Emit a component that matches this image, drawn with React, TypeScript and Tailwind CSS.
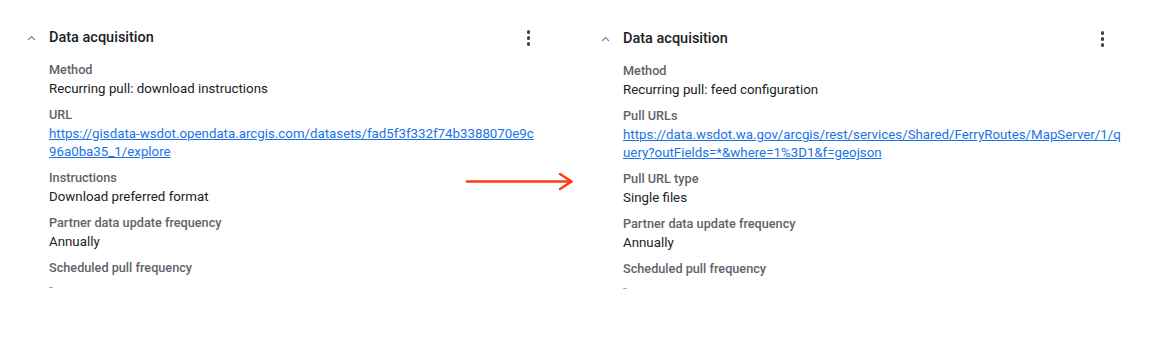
import React from "react";

type Field = { label: string; value: string; link?: boolean };

const leftFields: Field[] = [
  { label: "Method", value: "Recurring pull: download instructions" },
  {
    label: "URL",
    value:
      "https://gisdata-wsdot.opendata.arcgis.com/datasets/fad5f3f332f74b3388070e9c96a0ba35_1/explore",
    link: true,
  },
  { label: "Instructions", value: "Download preferred format" },
  { label: "Partner data update frequency", value: "Annually" },
  { label: "Scheduled pull frequency", value: "-" },
];

const rightFields: Field[] = [
  { label: "Method", value: "Recurring pull: feed configuration" },
  {
    label: "Pull URLs",
    value:
      "https://data.wsdot.wa.gov/arcgis/rest/services/Shared/FerryRoutes/MapServer/1/query?outFields=*&where=1%3D1&f=geojson",
    link: true,
  },
  { label: "Pull URL type", value: "Single files" },
  { label: "Partner data update frequency", value: "Annually" },
  { label: "Scheduled pull frequency", value: "-" },
];

function Panel({
  fields,
  offset,
  linkWidth,
}: {
  fields: Field[];
  offset: string;
  linkWidth: string;
}) {
  return (
    <div className={`w-[574px] shrink-0 ${offset}`}>
      <div className="flex items-center h-[24px] pl-[27px] pr-[44px]">
        <svg width="9" height="6" viewBox="0 0 9 6" className="shrink-0">
          <path d="M1 5 L4.5 1.5 L8 5" fill="none" stroke="#80868b" strokeWidth="1.2" />
        </svg>
        <div className="ml-[13px] text-[14.5px] font-medium text-[#202124] leading-[24px]">
          Data acquisition
        </div>
        <div className="ml-auto flex flex-col items-center gap-[2.5px]">
          <span className="block w-[3.5px] h-[3.5px] rounded-full bg-[#3c4043]" />
          <span className="block w-[3.5px] h-[3.5px] rounded-full bg-[#3c4043]" />
          <span className="block w-[3.5px] h-[3.5px] rounded-full bg-[#3c4043]" />
        </div>
      </div>
      <div className="pl-[49px] mt-[10px] flex flex-col gap-[7px]">
        {fields.map((f) => (
          <div key={f.label} className="flex flex-col">
            <div className="text-[12.7px] font-medium text-[#5f6368] leading-[20px]">{f.label}</div>
            {f.link ? (
              <a
                href="#"
                className={`${linkWidth} text-[13.3px] leading-[18px] text-[#1a73e8] underline break-all`}
              >
                {f.value}
              </a>
            ) : (
              <div
                className={`text-[13.3px] leading-[18px] ${
                  f.value === "-" ? "text-[#9aa0a6]" : "text-[#202124]"
                }`}
              >
                {f.value}
              </div>
            )}
          </div>
        ))}
      </div>
    </div>
  );
}

export default function App() {
  return (
    <div
      className="relative w-[1152px] h-[347px] bg-white overflow-hidden"
      style={{ fontFamily: "Roboto, 'Noto Sans', Arial, sans-serif" }}
    >
      <div className="flex pt-[26px]">
        <Panel fields={leftFields} offset="" linkWidth="w-[488px]" />
        <Panel fields={rightFields} offset="mt-[1px]" linkWidth="w-[498px]" />
      </div>
      <svg
        className="absolute left-[465px] top-[172px]"
        width="112"
        height="20"
        viewBox="0 0 112 20"
      >
        <path d="M2 9.5 L106 9.5" stroke="#ff3a12" strokeWidth="2.5" strokeLinecap="round" />
        <path
          d="M95 2 L106.5 9.5 L95 17"
          fill="none"
          stroke="#ff3a12"
          strokeWidth="2.5"
          strokeLinecap="round"
          strokeLinejoin="round"
        />
      </svg>
    </div>
  );
}
